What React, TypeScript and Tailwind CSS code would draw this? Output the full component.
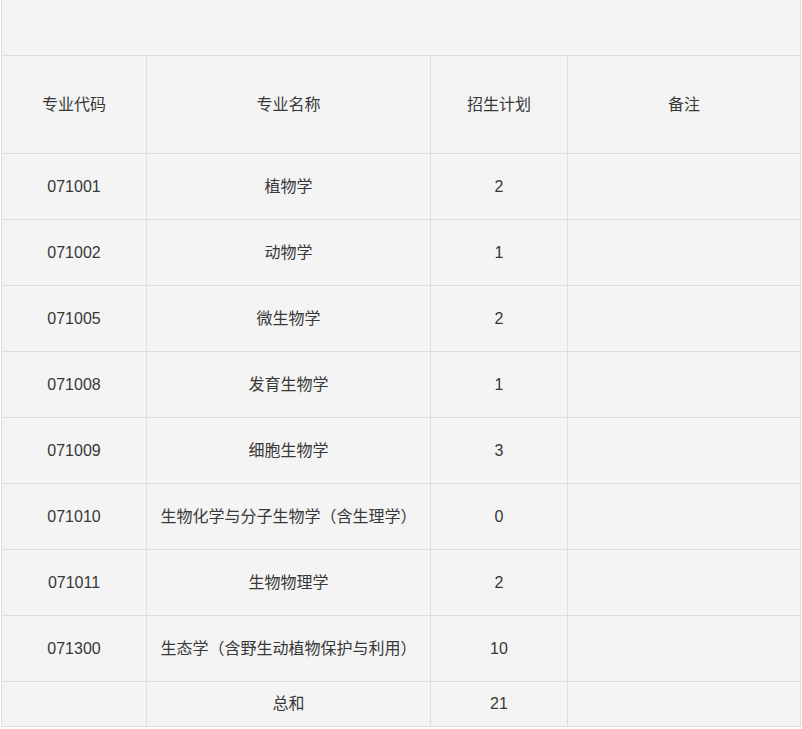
const rows = [
  { code: "071001", name: "植物学", plan: "2" },
  { code: "071002", name: "动物学", plan: "1" },
  { code: "071005", name: "微生物学", plan: "2" },
  { code: "071008", name: "发育生物学", plan: "1" },
  { code: "071009", name: "细胞生物学", plan: "3" },
  { code: "071010", name: "生物化学与分子生物学（含生理学）", plan: "0" },
  { code: "071011", name: "生物物理学", plan: "2" },
  { code: "071300", name: "生态学（含野生动植物保护与利用）", plan: "10" },
];

const cell = "border-r border-b border-[#dddddd] text-center align-middle p-0";

export default function App() {
  return (
    <div className="bg-white min-h-[729px] pl-[1px]">
      <table
        className="border-separate border-spacing-0 border-l border-[#dddddd] bg-[#f4f4f4] text-[16px] text-[#383838] w-[800px] table-fixed"
        style={{ fontFamily: '"Liberation Sans", "Noto Sans CJK SC", sans-serif' }}
      >
        <colgroup>
          <col className="w-[145px]" />
          <col className="w-[284px]" />
          <col className="w-[137px]" />
          <col className="w-[233px]" />
        </colgroup>
        <tbody>
          <tr className="h-[56px]">
            <td colSpan={4} className={cell}></td>
          </tr>
          <tr className="h-[98px]">
            <td className={cell}>专业代码</td>
            <td className={cell}>专业名称</td>
            <td className={cell}>招生计划</td>
            <td className={cell}>备注</td>
          </tr>
          {rows.map((r) => (
            <tr key={r.code} className="h-[66px]">
              <td className={cell}>{r.code}</td>
              <td className={cell}>{r.name}</td>
              <td className={cell}>{r.plan}</td>
              <td className={cell}></td>
            </tr>
          ))}
          <tr className="h-[45px]">
            <td className={cell}></td>
            <td className={cell}>总和</td>
            <td className={cell}>21</td>
            <td className={cell}></td>
          </tr>
        </tbody>
      </table>
    </div>
  );
}
